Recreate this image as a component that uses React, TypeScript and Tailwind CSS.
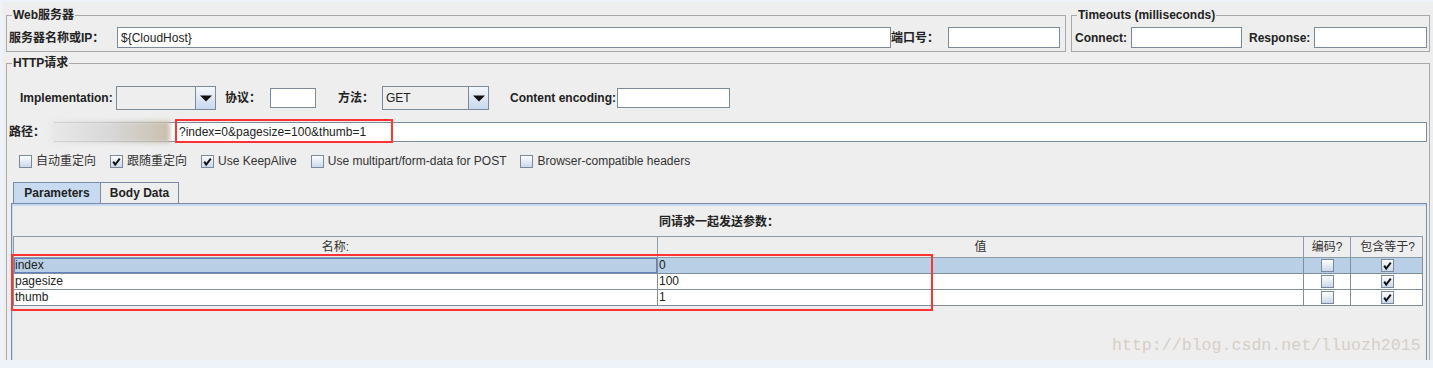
const font = "font-['Liberation_Sans','Noto_Sans_CJK_SC',sans-serif]";

function Box({ checked }: { checked?: boolean }) {
  return (
    <svg width="13" height="13" viewBox="0 0 13 13" className="shrink-0">
      <defs>
        <linearGradient id="cbg" x1="0" y1="0" x2="0" y2="1">
          <stop offset="0" stopColor="#ffffff" />
          <stop offset="1" stopColor="#c9d7ec" />
        </linearGradient>
      </defs>
      <rect x="0.5" y="0.5" width="12" height="12" fill="url(#cbg)" stroke="#7a8a99" />
      {checked && <path d="M3.2 6.6 L5.2 9.6 L9.8 3.6" fill="none" stroke="#111" strokeWidth="1.9" />}
    </svg>
  );
}

function Input({ w, h = 21, children }: { w: string; h?: number; children?: React.ReactNode }) {
  return (
    <div
      className={`${w} bg-white border border-[#7a8a99] px-[3px] text-[12px] text-[#222] flex items-center shrink-0`}
      style={{ height: h }}
    >
      {children}
    </div>
  );
}

function Combo({ w, value }: { w: string; value?: string }) {
  return (
    <div className={`${w} h-[24px] flex border border-[#7a8a99] bg-[#eeeeee] shrink-0`}>
      <div className="flex-1 flex items-center px-[3px] text-[12px] text-[#222] border-r border-[#7a8a99]">
        {value}
      </div>
      <div className="w-[19px] flex items-center justify-center bg-gradient-to-b from-[#f4f7fb] to-[#c8d8ee]">
        <svg width="12" height="7" viewBox="0 0 12 7">
          <polygon points="0,0.5 12,0.5 6,6.5" fill="#111" />
        </svg>
      </div>
    </div>
  );
}

const label = "text-[12px] font-bold text-[#222] shrink-0";

export default function App() {
  const rows = [
    { name: "index", value: "0" },
    { name: "pagesize", value: "100" },
    { name: "thumb", value: "1" },
  ];
  return (
    <div className={`w-[1433px] h-[368px] bg-[#eef3fa] overflow-hidden relative ${font}`}>
      <div className="ml-[3px] mt-[2px] h-[358px] bg-[#eeeeee] overflow-hidden">
        {/* top groups */}
        <div className="flex gap-[5px] pl-[3px] pt-[5px]">
          <fieldset className="w-[1060px] border border-[#a9a9a9] shrink-0">
            <legend className="ml-[5px] px-[1px] text-[12px] font-bold leading-[16px] text-[#222]">Web服务器</legend>
            <div className="flex items-center pl-[2px] pt-[4px] pb-[3px]">
              <span className={`${label} w-[108px]`}>服务器名称或IP：</span>
              <Input w="w-[774px]">${"{CloudHost}"}</Input>
              <span className={`${label} w-[57px]`}>端口号：</span>
              <Input w="w-[112px]" />
            </div>
          </fieldset>
          <fieldset className="w-[359px] border border-[#a9a9a9] shrink-0">
            <legend className="ml-[5px] px-[1px] text-[12px] font-bold leading-[16px] text-[#222]">
              Timeouts (milliseconds)
            </legend>
            <div className="flex items-center pl-[3px] pt-[4px] pb-[3px]">
              <span className={`${label} w-[56px]`}>Connect:</span>
              <Input w="w-[111px]" />
              <span className={`${label} w-[65px] ml-[7px]`}>Response:</span>
              <Input w="w-[113px]" />
            </div>
          </fieldset>
        </div>

        {/* HTTP request group */}
        <fieldset className="mx-[3px] mt-[3px] h-[320px] border border-[#a9a9a9]">
          <legend className="ml-[5px] px-[1px] text-[12px] font-bold leading-[16px] text-[#222]">HTTP请求</legend>

          <div className="flex items-center pl-[13px] mt-[15px] h-[24px]">
            <span className={`${label} w-[96px]`}>Implementation:</span>
            <Combo w="w-[100px]" />
            <span className={`${label} w-[45px] ml-[9px]`}>协议：</span>
            <Input w="w-[46px]" h={20} />
            <span className={`${label} w-[44px] ml-[22px]`}>方法：</span>
            <Combo w="w-[107px]" value="GET" />
            <span className={`${label} w-[107px] ml-[21px]`}>Content encoding:</span>
            <Input w="w-[113px]" h={20} />
          </div>

          <div className="flex items-center pl-[2px] pr-[2px] mt-[12px] h-[20px]">
            <span className={`${label} w-[45px]`}>路径：</span>
            <div className="flex-1 h-[20px] bg-white border border-[#7a8a99] flex items-center text-[12px] text-[#222] overflow-visible">
              <div className="w-[120px] h-[22px] -ml-[5px] shrink-0 bg-gradient-to-r from-[#e9e9e9] via-[#d8d8d8] to-[#c9bfae] blur-[2px]" />
              <span className="relative ml-[9px]">
                ?index=0&amp;pagesize=100&amp;thumb=1
                <span className="absolute -left-[4px] -top-[4px] w-[218px] h-[24px] border-2 border-[#ff3333]" />
              </span>
            </div>
          </div>

          <div className="flex items-center gap-[14px] pl-[12px] mt-[12px] h-[14px] text-[12px] text-[#333]">
            {[
              ["自动重定向", false],
              ["跟随重定向", true],
              ["Use KeepAlive", true],
              ["Use multipart/form-data for POST", false],
              ["Browser-compatible headers", false],
            ].map(([t, c]) => (
              <div key={t as string} className="flex items-center gap-[4px]">
                <Box checked={c as boolean} />
                <span>{t as string}</span>
              </div>
            ))}
          </div>

          {/* tabs */}
          <div className="flex ml-[6px] mt-[14px] h-[21px] items-end">
            <div className="w-[88px] h-[21px] border border-b-0 border-[#7a8aa8] bg-[#c8daf0] flex items-center justify-center text-[12px] font-bold text-[#222]">
              Parameters
            </div>
            <div className="w-[78px] h-[21px] border border-l-0 border-b-0 border-[#7a8aa8] bg-[#eeeeee] flex items-center justify-center text-[12px] font-bold text-[#222]">
              Body Data
            </div>
          </div>
          <div className="ml-[4px] mr-[2px] h-[170px] border border-[#7a8aa8] shadow-[inset_1px_2px_0_#c8daf0]">
            <div className="mt-[10px] text-center text-[12px] font-bold leading-[16px] text-[#222]">同请求一起发送参数：</div>
            <div className="relative ml-[1px] mt-[6px] w-[1410px] text-[12px] text-[#222]">
              <div className="grid grid-cols-[644px_646px_47px_73px] h-[22px] border border-[#8d9aa8] bg-[#eeeeee] text-[#333] font-normal">
                <div className="flex items-end justify-center pb-[1px] border-r border-[#8d9aa8]">名称:</div>
                <div className="flex items-end justify-center pb-[1px] border-r border-[#8d9aa8]">值</div>
                <div className="flex items-end justify-center pb-[1px] border-r border-[#8d9aa8]">编码?</div>
                <div className="flex items-end justify-center pb-[1px]">包含等于?</div>
              </div>
              {rows.map((r, i) => (
                <div
                  key={r.name}
                  className={`grid grid-cols-[644px_646px_47px_73px] h-[16px] border-b border-x border-[#808e9b] ${
                    i === 0 ? "bg-[#b8cfe5]" : "bg-white"
                  }`}
                >
                  <div
                    className={`border-r border-[#808e9b] leading-[15px] pl-[1px] ${
                      i === 0 ? "shadow-[inset_0_0_0_1px_#6382bf]" : ""
                    }`}
                  >
                    {r.name}
                  </div>
                  <div className="border-r border-[#808e9b] pl-[1px] leading-[15px]">{r.value}</div>
                  <div className="border-r border-[#808e9b] flex items-center justify-center">
                    <Box />
                  </div>
                  <div className="flex items-center justify-center">
                    <Box checked />
                  </div>
                </div>
              ))}
              <div className="absolute -left-[2px] top-[18px] w-[922px] h-[57px] border-2 border-[#ff3333]" />
            </div>
          </div>
        </fieldset>
      </div>

      <div className="absolute left-[1112px] top-[336px] text-[16.6px] leading-[20px] text-[#d6cfc7] font-['Liberation_Mono',monospace]">
        http://blog.csdn.net/lluozh2015
      </div>
    </div>
  );
}
